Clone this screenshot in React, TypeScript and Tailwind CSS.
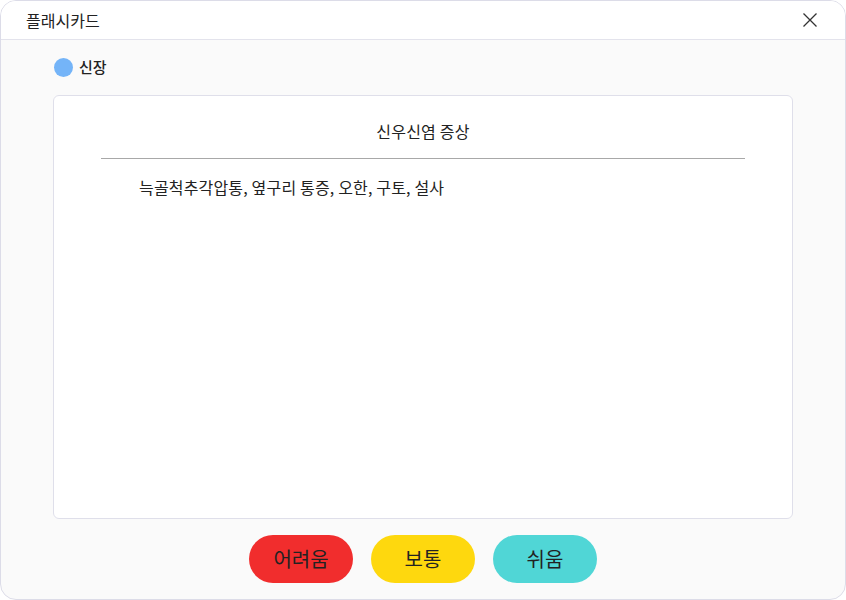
import React from 'react';

const font = { fontFamily: '"Noto Sans CJK KR", "Noto Sans", sans-serif' };

type Level = { label: string; bg: string };

const levels: Level[] = [
  { label: '어려움', bg: 'bg-[#f12d2d]' },
  { label: '보통', bg: 'bg-[#fed80e]' },
  { label: '쉬움', bg: 'bg-[#50d6d6]' },
];

export default function App() {
  return (
    <div style={font} className="w-[846px] h-[600px] bg-white">
      <div className="w-full h-full rounded-[16px] border border-[#dcdce8] bg-[#fafafa] overflow-hidden flex flex-col">
        {/* header */}
        <div className="h-[39px] shrink-0 bg-white border-b border-[#e3e3ec] flex items-center justify-between pl-[25px] pr-[27px]">
          <span className="text-[16px] text-[#222] leading-none">플래시카드</span>
          <svg width="16" height="16" viewBox="0 0 16 16" className="text-[#333]">
            <path d="M1.5 1.5 L14.5 14.5 M14.5 1.5 L1.5 14.5" stroke="currentColor" strokeWidth="1.3" fill="none" />
          </svg>
        </div>

        <div className="flex-1 flex flex-col px-[52px] pt-[17px]">
          <div className="h-[20px] flex items-center gap-[6px] pl-[1px]">
            <span className="w-[19px] h-[19px] rounded-full bg-[#74b4f8]" />
            <span className="text-[15px] font-medium text-[#222]">신장</span>
          </div>

          <div className="mt-[18px] h-[424px] rounded-[6px] border border-[#dfdfea] bg-white">
            <div className="pt-[23px] text-center text-[16px] leading-[24px] text-[#222] tracking-[0.2px]">신우신염 증상</div>
            <div className="mx-[47px] mt-[15px] h-px bg-[#a8a8a8]" />
            <p className="mt-[16px] ml-[85px] text-[16px] leading-[24px] text-[#222] tracking-[0.17px]">
              늑골척추각압통, 옆구리 통증, 오한, 구토, 설사
            </p>
          </div>

          <div className="mt-[16px] flex justify-center gap-[18px]">
            {levels.map((l) => (
              <button
                key={l.label}
                type="button"
                className={`w-[104px] h-[48px] rounded-full ${l.bg} text-[20px] text-[#222] flex items-center justify-center`}
              >
                {l.label}
              </button>
            ))}
          </div>
        </div>
      </div>
    </div>
  );
}
